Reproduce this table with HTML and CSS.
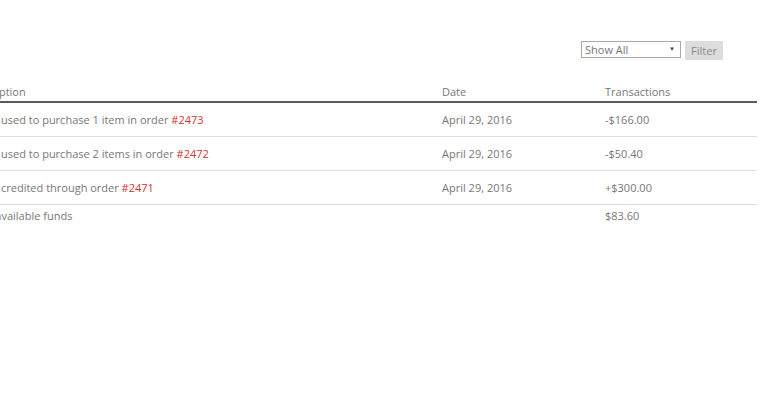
FILE: index.html
```html
<!DOCTYPE html>
<html>
<head>
<meta charset="utf-8">
<link rel="stylesheet" href="styles.css">
</head>
<body>
<div class="page">
  <div class="toolbar">
    <div class="select-wrap">
      <select class="select">
        <option>Show All</option>
      </select>
      <span class="arrow">&#9660;</span>
    </div>
    <button class="filter">Filter</button>
  </div>
  <table class="ledger">
    <thead>
      <tr>
        <th class="c-desc">Description</th>
        <th class="c-date">Date</th>
        <th class="c-amt">Transactions</th>
      </tr>
    </thead>
    <tbody>
      <tr>
        <td>Funds used to purchase 1 item in order <a href="#">#2473</a></td>
        <td>April 29, 2016</td>
        <td>-$166.00</td>
      </tr>
      <tr>
        <td>Funds used to purchase 2 items in order <a href="#">#2472</a></td>
        <td>April 29, 2016</td>
        <td>-$50.40</td>
      </tr>
      <tr>
        <td>Funds credited through order <a href="#">#2471</a></td>
        <td>April 29, 2016</td>
        <td>+$300.00</td>
      </tr>
    </tbody>
    <tfoot>
      <tr>
        <td>Total available funds</td>
        <td></td>
        <td>$83.60</td>
      </tr>
    </tfoot>
  </table>
</div>
</body>
</html>
```
FILE: styles.css
```css
html, body {
  margin: 0;
  padding: 0;
  background: #fff;
}
body {
  font-family: "Open Sans", "Liberation Sans", sans-serif;
  font-size: 11px;
  color: #777;
  overflow: hidden;
}
.page {
  width: 790px;
  margin-left: -33px;
  padding-top: 41px;
}
.toolbar {
  display: flex;
  justify-content: flex-end;
  align-items: flex-start;
  gap: 4px;
  padding-right: 34px;
  margin-bottom: 23px;
}
.select-wrap {
  position: relative;
  width: 100px;
  height: 17px;
}
.select {
  appearance: none;
  -webkit-appearance: none;
  box-sizing: border-box;
  width: 100px;
  height: 17px;
  margin: 0;
  padding: 0 0 0 3px;
  border: 1px solid #a9a9a9;
  border-radius: 0;
  background: #fff;
  font-family: inherit;
  font-size: 11px;
  color: #777;
  line-height: 15px;
}
.arrow {
  position: absolute;
  right: 6px;
  top: 5px;
  font-size: 6px;
  line-height: 6px;
  color: #444;
  pointer-events: none;
}
.filter {
  box-sizing: border-box;
  height: 19px;
  width: 38px;
  margin: 0;
  padding: 0;
  border: none;
  background: #ddd;
  font-family: inherit;
  font-size: 11px;
  color: #888;
  line-height: 19px;
}
.ledger {
  width: 790px;
  border-collapse: collapse;
  table-layout: fixed;
}
.c-desc { width: 475px; }
.c-date { width: 163px; }
.c-amt { width: 152px; }
.ledger th {
  text-align: left;
  font-weight: normal;
  color: #777;
  padding: 0 0 1px;
  line-height: 17px;
  border-bottom: 2px solid #5a5a5a;
}
.ledger td {
  padding: 8px 0;
  line-height: 17px;
  border-bottom: 1px solid #ddd;
  white-space: nowrap;
}
.ledger tfoot td {
  border-bottom: none;
  padding: 2px 0;
}
.ledger a {
  color: #d3322f;
  text-decoration: none;
}
```
